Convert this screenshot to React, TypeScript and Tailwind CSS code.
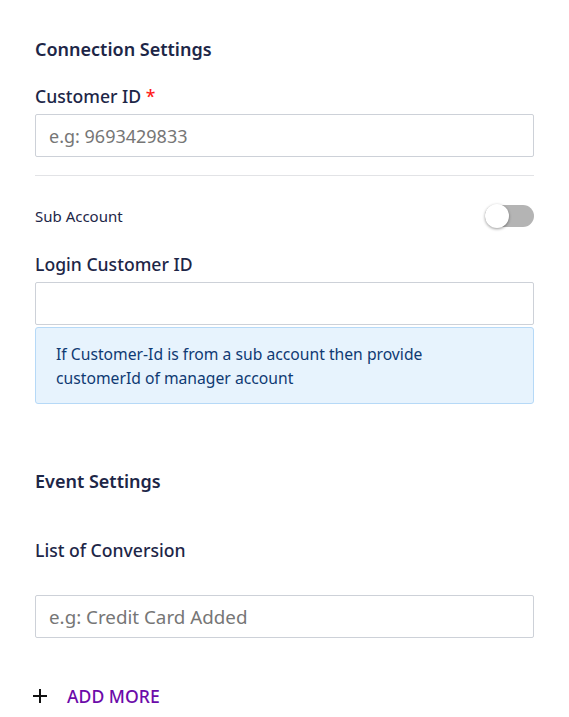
import { useState } from 'react';

const font = { fontFamily: '"Noto Sans", "Open Sans", sans-serif' };

export default function App() {
  const [sub, setSub] = useState(false);

  return (
    <div className="min-h-screen bg-white text-[#1d2647]" style={font}>
      <div className="px-[35px] pt-[38px] pb-4">
        {/* connection */}
        <h2 className="text-[18px] font-semibold leading-[22px]">Connection Settings</h2>

        <label className="mt-[25px] block text-[17.6px] font-medium leading-[22px]">
          Customer ID <span className="text-[#ff1a1a]">*</span>
        </label>
        <input
          className="mt-[7px] block h-[43px] w-full rounded-[2px] border border-[#cdd1d8] px-[13px] text-[18px] text-[#222] placeholder:text-[#767676] outline-none"
          placeholder="e.g: 9693429833"
        />

        <div className="mt-[18px] h-px bg-[#e2e3e6]" />

        <div className="mt-[29px] flex items-center justify-between">
          <span className="text-[15px] leading-[18px]">Sub Account</span>
          <button
            onClick={() => setSub(!sub)}
            className={`relative h-[22px] w-[49px] rounded-full ${sub ? 'bg-[#8fb8ee]' : 'bg-[#b4b4b4]'}`}
          >
            <span
              className={`absolute top-[-1px] h-[24px] w-[24px] rounded-full bg-white shadow-[0_1px_3px_rgba(0,0,0,0.4)] ${sub ? 'left-[25px]' : 'left-0'}`}
            />
          </button>
        </div>

        <label className="mt-[26px] block text-[17.6px] font-medium leading-[22px]">Login Customer ID</label>
        <input className="mt-[7px] block h-[43px] w-full rounded-[2px] border border-[#cdd1d8] px-[13px] text-[18px] outline-none" />
        <div className="mt-[2px] rounded-[3px] border border-[#b6d9f7] bg-[#e7f3fd] px-[20px] pt-[14px] pb-[13px] text-[15.7px] leading-[24px] text-[#0f3a73]">
          If Customer-Id is from a sub account then provide
          <br />
          customerId of manager account
        </div>

        {/* events */}
        <h2 className="mt-[66px] text-[18px] font-semibold leading-[22px]">Event Settings</h2>

        <label className="mt-[47px] block text-[17.6px] font-medium leading-[22px]">List of Conversion</label>
        <input
          className="mt-[34px] block h-[43px] w-full rounded-[2px] border border-[#cdd1d8] px-[13px] text-[18.8px] placeholder:text-[#767676] outline-none"
          placeholder="e.g: Credit Card Added"
        />

        <button className="mt-[47px] flex items-center gap-[20px] text-[#6c0ba9]">
          <svg width="14" height="14" viewBox="0 0 14 14" className="ml-[-2px]">
            <path d="M7 0v14M0 7h14" stroke="#111" strokeWidth="2" />
          </svg>
          <span className="text-[17.6px] font-medium leading-[22px]">ADD MORE</span>
        </button>
      </div>
    </div>
  );
}
